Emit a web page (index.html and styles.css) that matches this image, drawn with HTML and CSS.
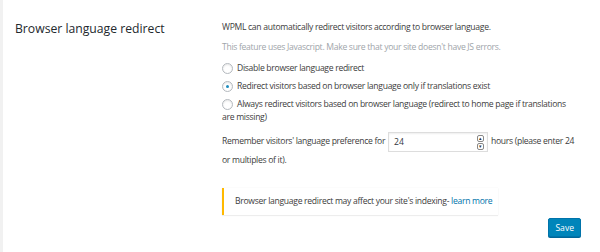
FILE: index.html
```html
<!DOCTYPE html>
<html lang="en">
<head>
    <meta charset="UTF-8">
    <title>Browser language redirect</title>
    <link rel="stylesheet" href="styles.css">
</head>
<body>
    <div class="page">
        <div class="box">
            <div class="box-title">
                <h3>Browser language redirect</h3>
            </div>
            <div class="box-content">
                <p>WPML can automatically redirect visitors according to browser language.</p>
                <p class="note">This feature uses Javascript. Make sure that your site doesn't have JS errors.</p>
                <ul class="options">
                    <li><label><span class="radio"></span>Disable browser language redirect</label></li>
                    <li><label><span class="radio checked"></span>Redirect visitors based on browser language only if translations exist</label></li>
                    <li><label><span class="radio"></span>Always redirect visitors based on browser language (redirect to home page if translations are missing)</label></li>
                </ul>
                <p class="remember">Remember visitors' language preference for <span class="number"><span class="number-value">24</span><span class="spin"><i>&#9652;</i><i>&#9662;</i></span></span> hours (please enter 24 or multiples of it).</p>
                <div class="notice">Browser language redirect may affect your site's indexing- <a href="#">learn more</a></div>
                <div class="actions">
                    <button class="button">Save</button>
                </div>
            </div>
        </div>
    </div>
</body>
</html>
```

FILE: styles.css
```css
body {
    margin: 0;
    background: #f1f1f1;
    font-family: "Open Sans", sans-serif;
    font-size: 8.6px;
    letter-spacing: -0.3px;
    color: #3c3c3c;
}
.page {
    margin-left: 3px;
    background: #fff;
    height: 252px;
}
.box {
    display: flex;
}
.box-title {
    width: 207px;
    padding-left: 12px;
}
.box-title h3 {
    margin: 20px 0 0;
    font-size: 12.2px;
    line-height: 18px;
    letter-spacing: 0;
    font-weight: normal;
    color: #23282d;
}
.box-content {
    width: 356px;
    padding-top: 21px;
}
p {
    margin: 0 0 7px;
    line-height: 13px;
}
.note {
    color: #a0a5aa;
    margin-bottom: 8px;
}
.options {
    list-style: none;
    margin: 0;
    padding: 0;
}
.options li {
    margin-bottom: 5px;
    line-height: 13px;
}
.options li:last-child {
    margin-bottom: 0;
}
.radio {
    display: inline-block;
    width: 11px;
    height: 11px;
    border: 1px solid #b4b9be;
    border-radius: 50%;
    vertical-align: -3px;
    margin-right: 4px;
    box-sizing: border-box;
    position: relative;
    box-shadow: inset 0 1px 2px rgba(0, 0, 0, 0.1);
}
.radio.checked::after {
    content: "";
    position: absolute;
    left: 3px;
    top: 3px;
    width: 3px;
    height: 3px;
    border-radius: 50%;
    background: #1e8cbe;
}
.remember {
    margin-top: 8px;
    line-height: 16px;
}
.number {
    display: inline-flex;
    align-items: center;
    justify-content: space-between;
    width: 100px;
    height: 20px;
    box-sizing: border-box;
    border: 1px solid #ddd;
    box-shadow: inset 0 1px 2px rgba(0, 0, 0, 0.07);
    padding: 0 3px 0 5px;
    margin: 0 1px;
    vertical-align: middle;
    color: #32373c;
    letter-spacing: 0;
}
.spin {
    display: flex;
    flex-direction: column;
    gap: 1px;
}
.spin i {
    font-style: normal;
    font-size: 5px;
    line-height: 5px;
    width: 5px;
    height: 5px;
    text-align: center;
    border: 1px solid #888;
    border-radius: 2px;
    color: #333;
}
.notice {
    margin-top: 20px;
    width: fit-content;
    border-left: 2px solid #ffb900;
    box-shadow: 0 1px 1px rgba(0, 0, 0, 0.06), 0 0 1px rgba(0, 0, 0, 0.08);
    padding: 7px 6px 7px 11px;
    line-height: 13px;
}
.notice a {
    color: #0073aa;
    text-decoration: none;
}
.actions {
    display: flex;
    justify-content: flex-end;
    margin: 3px -3px 0 0;
}
.button {
    background: #0085ba;
    border: 1px solid #0073aa;
    border-radius: 2px;
    color: #fff;
    font-family: inherit;
    font-size: 8.6px;
    letter-spacing: 0;
    height: 19px;
    padding: 0 6px;
    box-shadow: 0 1px 0 #006799;
}
```
